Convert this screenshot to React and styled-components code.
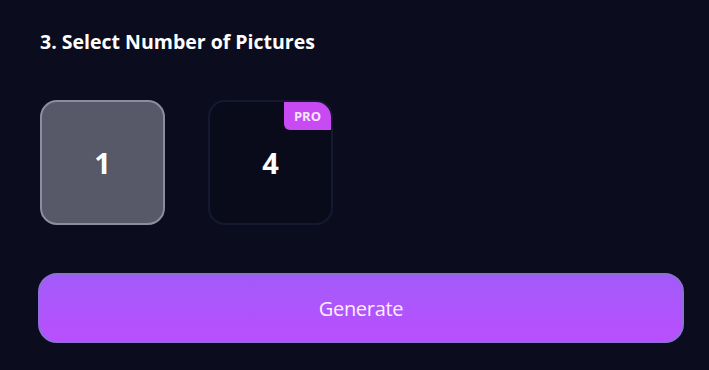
import React from "react";
import styled, { createGlobalStyle } from "styled-components";

const Global = createGlobalStyle`
  html, body { margin: 0; padding: 0; background: #0b0d1f; }
  body { font-family: "Open Sans", "Noto Sans", sans-serif; }
`;

const Page = styled.div`
  width: 709px;
  height: 370px;
  box-sizing: border-box;
  padding: 29px 26px 0 38px;
  background: #0b0d1f;
  display: flex;
  flex-direction: column;
`;

const Heading = styled.h2`
  margin: 0 0 0 2px;
  font-size: 19.5px;
  font-weight: 700;
  line-height: 26px;
  color: #ffffff;
`;

const Options = styled.div`
  display: flex;
  gap: 43px;
  margin: 45px 0 0 2px;
`;

const Option = styled.button`
  position: relative;
  width: 125px;
  height: 125px;
  box-sizing: border-box;
  border-radius: 17px;
  border: 2px solid ${(p) => (p.$active ? "#8c8d9e" : "#141930")};
  background: ${(p) => (p.$active ? "#575969" : "#090b1b")};
  color: #ffffff;
  font-family: "Open Sans", sans-serif;
  font-size: 29px;
  font-weight: 700;
  display: flex;
  align-items: center;
  justify-content: center;
  padding: 0;
  cursor: pointer;
  overflow: hidden;
`;

const ProBadge = styled.span`
  position: absolute;
  top: 0;
  right: 0;
  width: 47px;
  height: 28px;
  background: #c84af2;
  color: #f6e6ff;
  font-size: 13px;
  font-weight: 700;
  display: flex;
  align-items: center;
  justify-content: center;
  border-bottom-left-radius: 6px;
`;

const Generate = styled.button`
  margin-top: 48px;
  width: 646px;
  height: 70px;
  box-sizing: border-box;
  border-radius: 19px;
  border: 2px solid #8d6fd9;
  background: linear-gradient(180deg, #a35bfb 0%, #b94ffd 100%);
  color: #fbeeff;
  font-family: "Open Sans", sans-serif;
  font-size: 20px;
  font-weight: 400;
  letter-spacing: -0.3px;
  cursor: pointer;
`;

export default function App() {
  return (
    <>
      <Global />
      <Page>
        <Heading>3. Select Number of Pictures</Heading>
        <Options>
          <Option $active>1</Option>
          <Option>
            4<ProBadge>PRO</ProBadge>
          </Option>
        </Options>
        <Generate>Generate</Generate>
      </Page>
    </>
  );
}
